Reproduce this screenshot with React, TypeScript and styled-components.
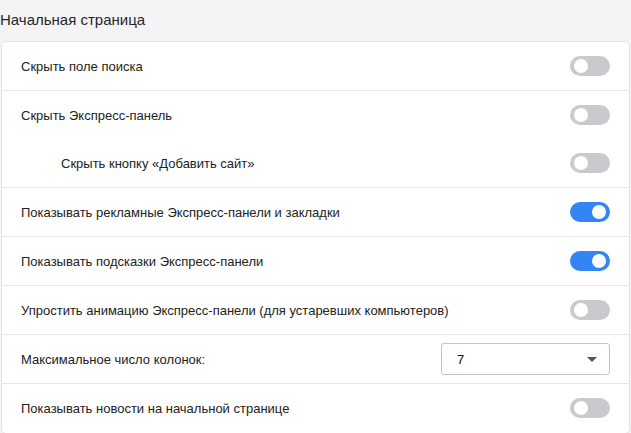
import React from "react";
import styled, { createGlobalStyle } from "styled-components";

const Global = createGlobalStyle`
  html, body { margin: 0; padding: 0; background: #f4f4f6; }
  body { font-family: "Liberation Sans", Arial, sans-serif; color: #202124; }
`;

const Page = styled.div`
  width: 631px;
  height: 433px;
  box-sizing: border-box;
  padding: 0 1px 0 1px;
  overflow: hidden;
`;

const Title = styled.h2`
  margin: 0;
  margin-left: -1px;
  height: 41px;
  line-height: 40px;
  font-size: 15px;
  font-weight: 400;
  color: #26262a;
`;

const Card = styled.div`
  background: #fff;
  border: 1px solid #e3e3e6;
  border-radius: 5px;
  box-sizing: border-box;
  height: 393px;
  display: flex;
  flex-direction: column;
`;

const Row = styled.div<{ $indent?: boolean; $divider?: boolean }>`
  display: flex;
  align-items: center;
  justify-content: space-between;
  height: 48px;
  padding: 0 19px 0 ${(p) => (p.$indent ? 59 : 19)}px;
  border-top: ${(p) => (p.$divider ? "1px solid #e6e6e8" : "none")};
  flex-shrink: 0;
  font-size: 13px;
  color: #222;
`;

const Track = styled.div<{ $on: boolean }>`
  width: 40px;
  height: 20px;
  border-radius: 10px;
  background: ${(p) => (p.$on ? "#3385f5" : "#c9c9ce")};
  display: flex;
  align-items: center;
  justify-content: ${(p) => (p.$on ? "flex-end" : "flex-start")};
  padding: 0 4px;
  box-sizing: border-box;
`;

const Knob = styled.div`
  width: 14px;
  height: 14px;
  border-radius: 50%;
  background: #fff;
`;

const Select = styled.div`
  width: 169px;
  height: 32px;
  box-sizing: border-box;
  border: 1px solid #c4c4c8;
  border-radius: 3px;
  display: flex;
  align-items: center;
  justify-content: space-between;
  padding: 0 12px 0 15px;
  font-size: 13px;
  color: #111;
`;

const Caret = styled.div`
  width: 0;
  height: 0;
  border-left: 5px solid transparent;
  border-right: 5px solid transparent;
  border-top: 5px solid #555;
`;

const Toggle = ({ on }: { on: boolean }) => (
  <Track $on={on}>
    <Knob />
  </Track>
);

const rows: { label: string; on: boolean; indent?: boolean; divider: boolean }[] = [
  { label: "Скрыть поле поиска", on: false, divider: false },
  { label: "Скрыть Экспресс-панель", on: false, divider: true },
  { label: "Скрыть кнопку «Добавить сайт»", on: false, indent: true, divider: false },
  { label: "Показывать рекламные Экспресс-панели и закладки", on: true, divider: true },
  { label: "Показывать подсказки Экспресс-панели", on: true, divider: true },
  { label: "Упростить анимацию Экспресс-панели (для устаревших компьютеров)", on: false, divider: true },
];

export default function App() {
  return (
    <Page>
      <Global />
      <Title>Начальная страница</Title>
      <Card>
        {rows.map((r) => (
          <Row key={r.label} $indent={r.indent} $divider={r.divider}>
            <span>{r.label}</span>
            <Toggle on={r.on} />
          </Row>
        ))}
        <Row $divider>
          <span>Максимальное число колонок:</span>
          <Select>
            <span>7</span>
            <Caret />
          </Select>
        </Row>
        <Row $divider>
          <span>Показывать новости на начальной странице</span>
          <Toggle on={false} />
        </Row>
      </Card>
    </Page>
  );
}
